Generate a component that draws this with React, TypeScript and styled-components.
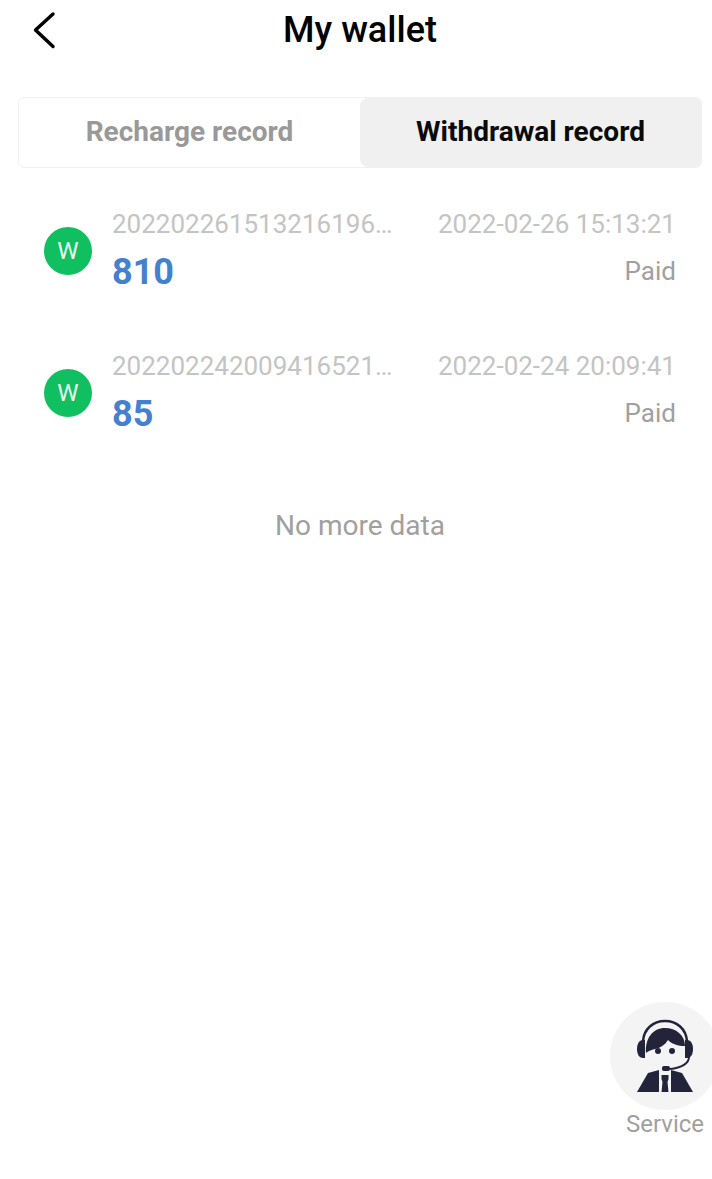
import styled, { createGlobalStyle } from 'styled-components'

const GlobalStyle = createGlobalStyle`
    html, body {
        margin: 0;
        padding: 0;
        background: #fff;
        font-family: Roboto, 'Liberation Sans', sans-serif;
        overflow: hidden;
    }
`

const records = [
    { id: '202202261513216196…', time: '2022-02-26 15:13:21', amount: '810' },
    { id: '202202242009416521…', time: '2022-02-24 20:09:41', amount: '85' },
]

function AgentIcon() {
    return (
        <svg width="58" height="76" viewBox="0 0 58 76">
            <path d="M7 23C8 11 17 3 29 3s21 8 22 20" fill="none" stroke="#23233a" strokeWidth="2.500" />
            <path d="M9 22v18H7C3 40 1 36 1 31s2-9 6-9z" fill="#23233a" />
            <path d="M49 22v18h2c4 0 6-4 6-9s-2-9-6-9z" fill="#23233a" />
            <path d="M10 35C9 20 17 10 29 10c11 0 20 7 20 18-7 0-13-2-17-6-3 5-8 8-13 9-4 1-7 2-9 4z" fill="#23233a" />
            <circle cx="22" cy="33" r="3" fill="#23233a" />
            <circle cx="36" cy="33" r="3" fill="#23233a" />
            <path d="M53 39c0 6-7 11-19 12" fill="none" stroke="#23233a" strokeWidth="2" />
            <rect x="26" y="48" width="8" height="5" rx="2" fill="#23233a" />
            <path d="M1 74 12 55l11-3v22z" fill="#23233a" />
            <path d="M57 74 46 55l-11-3v22z" fill="#23233a" />
            <path d="M25.500 57h7v4l-1 3 1 10h-7l1-10-1-3z" fill="#23233a" />
        </svg>
    )
}

export default function App() {
    return (
        <>
            <GlobalStyle />
            <Page>
                <Header>
                    <BackButton>
                        <svg width="26" height="38" viewBox="0 0 26 38">
                            <path d="M22 3 4.500 19 22 35.500" fill="none" stroke="#000" strokeWidth="3.500" strokeLinecap="round" strokeLinejoin="round" />
                        </svg>
                    </BackButton>
                    <Title>My wallet</Title>
                </Header>
                <Tabs>
                    <Tab>Recharge record</Tab>
                    <Tab $active>Withdrawal record</Tab>
                </Tabs>
                <List>
                    {records.map((r) => (
                        <Row key={r.id}>
                            <Badge>W</Badge>
                            <Info>
                                <TopLine>
                                    <span>{r.id}</span>
                                    <span>{r.time}</span>
                                </TopLine>
                                <BottomLine>
                                    <Amount>{r.amount}</Amount>
                                    <Status>Paid</Status>
                                </BottomLine>
                            </Info>
                        </Row>
                    ))}
                </List>
                <NoMore>No more data</NoMore>
                <Service>
                    <ServiceCircle>
                        <AgentIcon />
                    </ServiceCircle>
                    <ServiceLabel>Service</ServiceLabel>
                </Service>
            </Page>
        </>
    )
}

const Page = styled.div`
    position: relative;
    width: 712px;
    height: 1179px;
    overflow: hidden;
    background: #fff;
`
const Header = styled.div`
    position: relative;
    height: 59px;
    padding-left: 8px;
    display: flex;
    align-items: center;
    justify-content: center;
`
const BackButton = styled.div`
    position: absolute;
    left: 31px;
    top: 11px;
    line-height: 0;
`
const Title = styled.h1`
    margin: 0;
    font-size: 36px;
    font-weight: 500;
    color: #000;
`
const Tabs = styled.div`
    display: flex;
    box-sizing: border-box;
    width: 684px;
    height: 71px;
    margin: 38px 0 0 18px;
    border: 1px solid #f0f0f0;
    border-radius: 6px;
    overflow: hidden;
`
const Tab = styled.div<{ $active?: boolean }>`
    flex: 1;
    display: flex;
    align-items: center;
    justify-content: center;
    padding-bottom: 2px;
    font-size: 28px;
    font-weight: 700;
    color: ${(p) => (p.$active ? '#0a0a0a' : '#999')};
    background: ${(p) => (p.$active ? '#f0f0f0' : '#fff')};
    border-radius: 8px 0 0 8px;
`
const List = styled.div`
    display: flex;
    flex-direction: column;
    gap: 42px;
    padding: 33px 36px 0 44px;
`
const Row = styled.div`
    display: flex;
    align-items: center;
    height: 100px;
    gap: 20px;
`
const Badge = styled.div`
    flex: none;
    width: 48px;
    height: 48px;
    border-radius: 50%;
    background: #10c060;
    color: #e8f8ee;
    font-size: 24px;
    display: flex;
    align-items: center;
    justify-content: center;
`
const Info = styled.div`
    flex: 1;
    display: flex;
    flex-direction: column;
    gap: 16px;
    margin-bottom: 4px;
`
const TopLine = styled.div`
    display: flex;
    justify-content: space-between;
    font-size: 26px;
    line-height: 30px;
    color: #c4c4c4;
`
const BottomLine = styled.div`
    display: flex;
    justify-content: space-between;
    align-items: center;
    height: 34px;
`
const Amount = styled.span`
    font-size: 36px;
    font-weight: 700;
    color: #4480d0;
`
const Status = styled.span`
    margin-bottom: 2px;
    font-size: 26px;
    color: #a0a0a0;
`
const NoMore = styled.div`
    margin-top: 66px;
    padding-left: 8px;
    text-align: center;
    font-size: 28px;
    line-height: 34px;
    color: #a0a0a0;
`
const Service = styled.div`
    position: absolute;
    left: 610px;
    top: 1002px;
    display: flex;
    flex-direction: column;
`
const ServiceCircle = styled.div`
    width: 110px;
    height: 108px;
    border-radius: 50%;
    background: #f4f4f5;
    display: flex;
    align-items: center;
    justify-content: center;
`
const ServiceLabel = styled.div`
    margin: 0 0 0 16px;
    font-size: 24px;
    line-height: 28px;
    color: #a0a0a0;
`
